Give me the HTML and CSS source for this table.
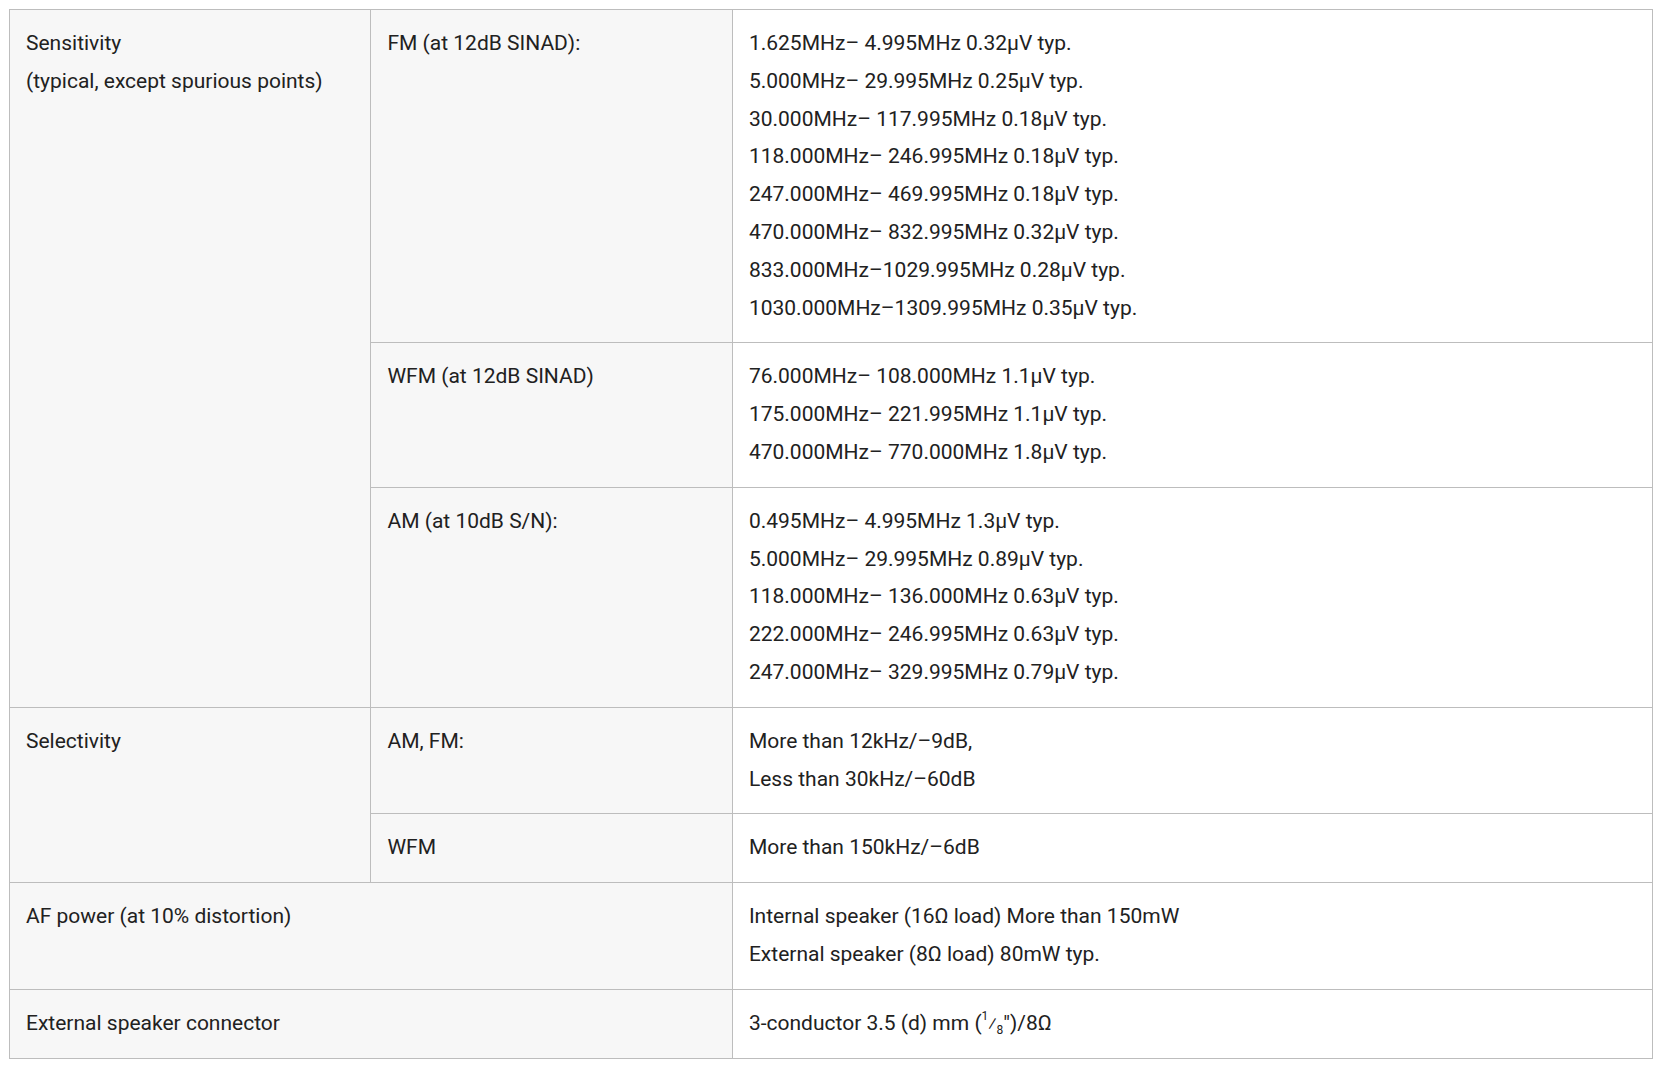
FILE: index.html
```html
<!DOCTYPE html>
<html lang="en">
<head>
<meta charset="utf-8">
<title>Specifications</title>
<link rel="stylesheet" href="styles.css">
</head>
<body>
<table class="spec">
  <colgroup>
    <col class="c1"><col class="c2"><col class="c3">
  </colgroup>
  <tbody>
    <tr>
      <td class="head" rowspan="3">Sensitivity<br>(typical, except spurious points)</td>
      <td class="head">FM (at 12dB SINAD):</td>
      <td class="val">1.625MHz– 4.995MHz 0.32μV typ.<br>5.000MHz– 29.995MHz 0.25μV typ.<br>30.000MHz– 117.995MHz 0.18μV typ.<br>118.000MHz– 246.995MHz 0.18μV typ.<br>247.000MHz– 469.995MHz 0.18μV typ.<br>470.000MHz– 832.995MHz 0.32μV typ.<br>833.000MHz–1029.995MHz 0.28μV typ.<br>1030.000MHz–1309.995MHz 0.35μV typ.</td>
    </tr>
    <tr>
      <td class="head">WFM (at 12dB SINAD)</td>
      <td class="val">76.000MHz– 108.000MHz 1.1μV typ.<br>175.000MHz– 221.995MHz 1.1μV typ.<br>470.000MHz– 770.000MHz 1.8μV typ.</td>
    </tr>
    <tr>
      <td class="head">AM (at 10dB S/N):</td>
      <td class="val">0.495MHz– 4.995MHz 1.3μV typ.<br>5.000MHz– 29.995MHz 0.89μV typ.<br>118.000MHz– 136.000MHz 0.63μV typ.<br>222.000MHz– 246.995MHz 0.63μV typ.<br>247.000MHz– 329.995MHz 0.79μV typ.</td>
    </tr>
    <tr>
      <td class="head" rowspan="2">Selectivity</td>
      <td class="head">AM, FM:</td>
      <td class="val">More than 12kHz/–9dB,<br>Less than 30kHz/–60dB</td>
    </tr>
    <tr>
      <td class="head">WFM</td>
      <td class="val">More than 150kHz/–6dB</td>
    </tr>
    <tr>
      <td class="head" colspan="2">AF power (at 10% distortion)</td>
      <td class="val">Internal speaker (16Ω load) More than 150mW<br>External speaker (8Ω load) 80mW typ.</td>
    </tr>
    <tr>
      <td class="head" colspan="2">External speaker connector</td>
      <td class="val">3-conductor 3.5 (d) mm (<sup class="frac-up">1</sup><span class="frac-slash">⁄</span><sub class="frac-down">8</sub>")/8Ω</td>
    </tr>
  </tbody>
</table>
</body>
</html>
```
FILE: styles.css
```css
html, body {
  background: #ffffff;
}
body {
  margin: 9px 11px 2px 9px;
  font-family: Roboto, "Liberation Sans", Arial, sans-serif;
  font-size: 21px;
  color: #212121;
}
.spec {
  width: 100%;
  border-collapse: collapse;
  table-layout: fixed;
}
.c1 { width: 22%; }
.c2 { width: 22%; }
.c3 { width: 56%; }
.spec td {
  border: 1px solid #bdbdbd;
  padding: 15px 16px;
  line-height: 1.8;
  vertical-align: top;
  text-align: left;
}
.spec td.head {
  background: #f7f7f7;
}
.spec td.val {
  background: #ffffff;
}
.frac-up {
  font-size: 12px;
  vertical-align: 10px;
  line-height: 0;
}
.frac-slash {
  font-size: 18px;
}
.frac-down {
  font-size: 12px;
  vertical-align: -4px;
  line-height: 0;
}
```
